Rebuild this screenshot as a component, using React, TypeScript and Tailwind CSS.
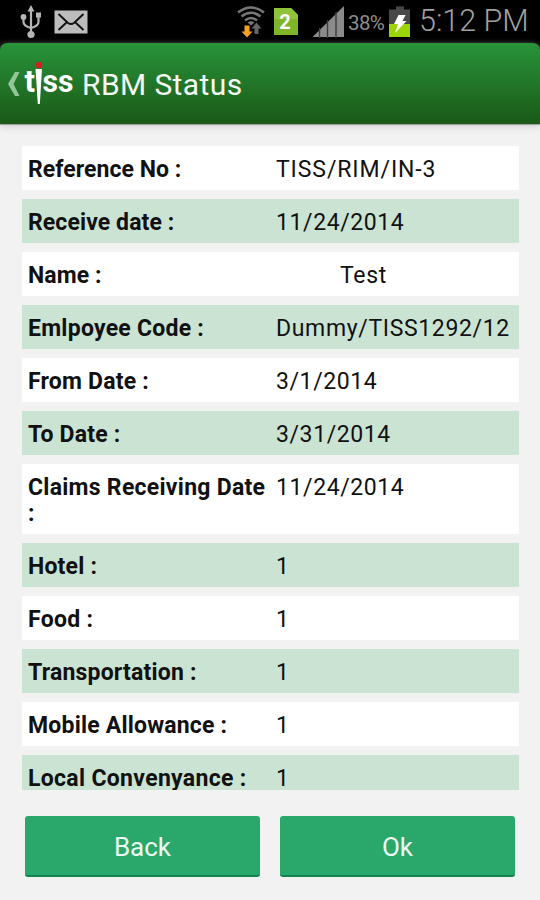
import React from 'react';

interface StatusRow {
  label: string;
  value: string;
  labelClass: string;
  valueClass: string;
}

const rows: StatusRow[] = [
  { label: 'Reference No :', value: 'TISS/RIM/IN-3', labelClass: 'tracking-[0.05px]', valueClass: 'tracking-[0.9px]' },
  { label: 'Receive date :', value: '11/24/2014', labelClass: 'tracking-[0.1px]', valueClass: 'tracking-[0.6px]' },
  { label: 'Name :', value: 'Test', labelClass: 'tracking-[0.1px]', valueClass: 'pl-[64px] tracking-[0.7px]' },
  { label: 'Emlpoyee Code :', value: 'Dummy/TISS1292/12', labelClass: 'tracking-[0.25px]', valueClass: 'tracking-[0.65px]' },
  { label: 'From Date :', value: '3/1/2014', labelClass: 'tracking-[0.2px]', valueClass: 'tracking-[0.6px]' },
  { label: 'To Date :', value: '3/31/2014', labelClass: 'tracking-[0.2px]', valueClass: 'tracking-[0.6px]' },
  { label: 'Claims Receiving Date :', value: '11/24/2014', labelClass: 'tracking-[0.27px]', valueClass: 'tracking-[0.6px]' },
  { label: 'Hotel :', value: '1', labelClass: 'tracking-[0.2px]', valueClass: '' },
  { label: 'Food :', value: '1', labelClass: 'tracking-[0.3px]', valueClass: '' },
  { label: 'Transportation :', value: '1', labelClass: 'tracking-[0.2px]', valueClass: '' },
  { label: 'Mobile Allowance :', value: '1', labelClass: 'tracking-[0.2px]', valueClass: '' },
  { label: 'Local Convenyance :', value: '1', labelClass: 'tracking-[0.32px]', valueClass: '' },
];

const UsbIcon = () => (
  <svg width="22" height="34" viewBox="0 0 22 34" fill="none" stroke="#b5b5b5" strokeWidth="2.2">
    <path d="M11 5v24M3.500 13v4q0 4 7.500 6M18.500 11v6q0 4-7.500 6" />
    <path d="M11 0l3.500 6.500h-7z" fill="#b5b5b5" stroke="none" />
    <circle cx="11" cy="29.500" r="3.600" fill="#b5b5b5" stroke="none" />
    <circle cx="3.500" cy="12" r="2.900" fill="#b5b5b5" stroke="none" />
    <rect x="16" y="7.500" width="5" height="5" fill="#b5b5b5" stroke="none" />
  </svg>
);

const MailIcon = () => (
  <svg width="34" height="24" viewBox="0 0 34 24" fill="none">
    <rect x="0.500" y="0.500" width="33" height="23" fill="#bcbcbc" />
    <path d="M4.500 4l9.500 9q3 2 6 0l9.500-9M4.500 20l8-7.500M29.500 20l-8-7.500" stroke="#111" strokeWidth="1.900" />
  </svg>
);

const WifiIcon = () => (
  <svg width="28" height="32" viewBox="0 0 28 32" fill="none">
    <g stroke="#777" strokeWidth="2.600">
      <path d="M1 6.500q13-10 26 0" />
      <path d="M4.500 10.500q9.500-7.500 19 0" />
      <path d="M8 14.500q6-5 12 0" />
    </g>
    <path d="M10.500 16.500q3.500-2.500 7 0l-3.500 3z" fill="#777" />
    <path d="M7.500 19.500h5v6h3l-5.500 6-5.500-6h3z" fill="#f7a128" />
    <path d="M17.500 28v-5.500h-3l5-6 5 6h-3v5.500z" fill="#666" />
  </svg>
);

const SimIcon = () => (
  <svg width="26" height="29" viewBox="0 0 26 29">
    <path d="M1 1h17l7 7v20h-24z" fill="#7fb52b" />
    <path d="M1 1h17l7 7v4h-24z" fill="#8fc33b" />
    <text x="12" y="21.500" textAnchor="middle" fontFamily="Roboto, sans-serif" fontSize="20" fontWeight="700" fill="#fff">
      2
    </text>
  </svg>
);

const SignalIcon = () => (
  <svg width="33" height="32" viewBox="0 0 33 32">
    <path d="M0.500 31L32 0v31z" fill="#8b8b8b" />
    <path d="M7.500 22v10M15.500 14v18M24 6v26" stroke="#3c3c3c" strokeWidth="1.400" />
  </svg>
);

const BatteryIcon = () => (
  <svg width="22" height="32" viewBox="0 0 22 32">
    <path d="M7 0.500h8v3h6v15h-21v-15h7z" fill="#484848" />
    <rect x="0" y="18" width="21" height="13" fill="#9bd400" />
    <path d="M9.500 9h7l-3 6h4l-11.500 12 3-9h-4z" fill="#fff" />
  </svg>
);

const StatusBar = () => (
  <div className="h-[50px] w-full shrink-0 bg-black">
    <div className="flex h-[43px] items-center pl-5">
      <UsbIcon />
      <div className="pl-[12px]">
        <MailIcon />
      </div>
      <div className="pl-[149px]">
        <WifiIcon />
      </div>
      <div className="pl-[8px]">
        <SimIcon />
      </div>
      <div className="pl-[13px]">
        <SignalIcon />
      </div>
      <span className="w-[44px] pt-[3px] pl-[3px] text-[20.5px] leading-none tracking-[-0.6px] text-[#8c8c8c]">38%</span>
      <BatteryIcon />
      <span className="pl-[8px] text-[30.5px] leading-none font-light whitespace-nowrap text-[#a0a0a0]">5:12 PM</span>
    </div>
  </div>
);

// The "i" of the wordmark is a spike with a red dot
const TissLogo = () => (
  <svg
    width="50"
    height="46"
    viewBox="0 0 50 46"
    className="overflow-visible"
    fontFamily="Roboto, sans-serif"
    fontSize="32"
    fontWeight="700"
    fill="#fff"
  >
    <text x="0.500" y="31" textLength="10.500" lengthAdjust="spacingAndGlyphs">t</text>
    <text x="18.500" y="31" textLength="31" lengthAdjust="spacingAndGlyphs">ss</text>
    <path d="M11.500 8h6.500l-2.200 35h-2z" />
    <circle cx="15" cy="4" r="3.200" fill="#d32020" />
  </svg>
);

const ActionBar = () => (
  <header className="-mt-[7px] flex h-[81px] shrink-0 items-center rounded-t-[7px] bg-linear-to-b from-[#28943a] to-[#1b5918] pl-[7px] shadow-[0_1px_1px_#999,0_3px_7px_#d4d4d4]">
    <svg width="13" height="26" viewBox="0 0 13 26" fill="#94c598">
      <path d="M8 1h4.500l-6 12 6 12H8L1 13z" />
    </svg>
    <div className="pl-1">
      <TissLogo />
    </div>
    <h1 className="pt-[2px] pl-[8px] text-[30px] leading-[36px] tracking-[0.4px] text-[#f5f9f3]">RBM Status</h1>
  </header>
);

export default function App() {
  return (
    <div className="flex h-[900px] w-[540px] flex-col overflow-hidden bg-[#f2f2f2] font-['Roboto',sans-serif]">
      <StatusBar />
      <ActionBar />

      <main className="mt-[22px] ml-[22px] h-[644px] w-[497px] shrink-0 overflow-hidden">
        <div className="flex flex-col gap-[9px]">
          {rows.map((row, index) => (
            <div
              key={row.label}
              className={`flex pt-[11px] pb-[7px] pl-[6px] text-[23px] leading-[26px] text-[#111] ${
                index % 2 === 0 ? 'bg-white' : 'bg-[#cbe3d2]'
              }`}
            >
              <div className={`w-[240px] shrink-0 font-bold ${row.labelClass}`}>{row.label}</div>
              <div className={`pl-[8px] whitespace-nowrap`}>
                <div className={row.valueClass}>{row.value}</div>
              </div>
            </div>
          ))}
        </div>
      </main>

      <footer className="mt-[26px] flex gap-5 px-[25px] text-[26px] text-[#eefaf2]">
        <button className="h-[61px] w-[235px] rounded-[3px] border-b-2 border-[#148350] bg-[#2aa86b] pt-[3px]">Back</button>
        <button className="h-[61px] w-[235px] rounded-[3px] border-b-2 border-[#148350] bg-[#2aa86b] pt-[3px]">Ok</button>
      </footer>
    </div>
  );
}
